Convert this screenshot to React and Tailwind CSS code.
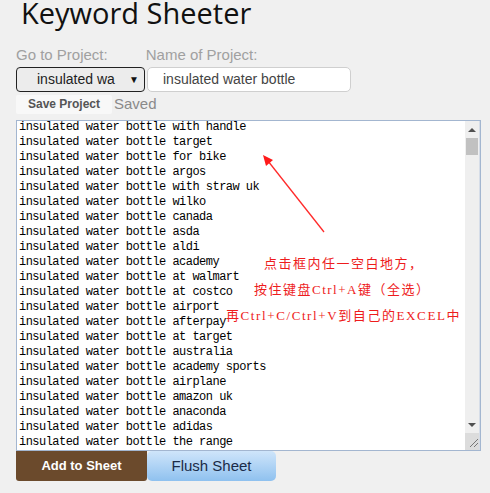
import React from "react";

const items = [
  "with handle", "target", "for bike", "argos", "with straw uk", "wilko", "canada", "asda", "aldi",
  "academy", "at walmart", "at costco", "airport", "afterpay", "at target", "australia",
  "academy sports", "airplane", "amazon uk", "anaconda", "adidas", "the range",
];

export default function App() {
  return (
    <div className="relative w-[490px] h-[493px] overflow-hidden bg-[#f0f0f0] pl-[16px]">
      <h1 className="pl-[5px] -mt-[3px] h-[47px] text-[29px] leading-[32px] text-[#111] font-['Open_Sans',sans-serif] font-normal whitespace-nowrap">
        Keyword Sheeter
      </h1>
      <div className="flex gap-[38px] h-[23px] items-center font-['Liberation_Sans',Arial,sans-serif] text-[15px] text-[#a0a0a0]">
        <span>Go to Project:</span>
        <span>Name of Project:</span>
      </div>
      <div className="flex gap-[2px] font-['Liberation_Sans',Arial,sans-serif] text-[14px]">
        <div className="w-[129px] h-[25px] border border-[#222] rounded-[4px] bg-[#ececec] flex items-center justify-between pl-[20px] pr-[5px] text-[#222]">
          <span>insulated wa</span>
          <span className="text-[10px] text-[#111]">▼</span>
        </div>
        <div className="w-[204px] h-[25px] border border-[#cfcfcf] rounded-[5px] bg-white flex items-center pl-[15px] text-[#444]">
          insulated water bottle
        </div>
      </div>
      <div className="flex items-center h-[22px] mt-[1px] font-['Liberation_Sans',Arial,sans-serif]">
        <div className="w-[96px] h-[19px] bg-[#f8f8f8] rounded-[2px] flex items-center justify-center text-[12px] font-bold text-[#555]">
          Save Project
        </div>
        <span className="ml-[2px] text-[15px] text-[#8a8a8a]">Saved</span>
      </div>
      <div className="mt-[5px] w-[465px] h-[331px] border border-[#a3b6d0] bg-white flex">
        <div className="flex-1 pl-[2px] overflow-hidden font-['Liberation_Mono',monospace] text-[12px] tracking-[-0.53px] leading-[15px] text-black">
          {items.map((t, i) => (
            <div key={i} className={i === 0 ? "-mt-[1px] whitespace-pre" : "whitespace-pre"}>
              insulated water bottle {t}
            </div>
          ))}
        </div>
        <div className="w-[15px] bg-[#efefef] flex flex-col border-r border-[#d6dde8]">
          <div className="h-[17px] flex items-center justify-center">
            <div className="w-0 h-0 border-l-[4px] border-r-[4px] border-b-[4px] border-l-transparent border-r-transparent border-b-[#505050]" />
          </div>
          <div className="mx-[1px] h-[17px] bg-[#c1c1c1]" />
          <div className="flex-1" />
          <div className="h-[17px] flex items-center justify-center">
            <div className="w-0 h-0 border-l-[4px] border-r-[4px] border-t-[4px] border-l-transparent border-r-transparent border-t-[#505050]" />
          </div>
          <div className="h-[17px] bg-[#dcdcdc] relative">
            <svg width="15" height="17" className="absolute inset-0">
              <line x1="5" y1="14" x2="13" y2="6" stroke="#777" strokeWidth="1" />
              <line x1="9" y1="14" x2="13" y2="10" stroke="#777" strokeWidth="1" />
            </svg>
          </div>
        </div>
      </div>
      <div className="flex font-['Liberation_Sans',Arial,sans-serif]">
        <div className="w-[131px] h-[30px] bg-[#6b4a2c] rounded-b-[3px] flex items-center justify-center text-white font-bold text-[13px]">
          Add to Sheet
        </div>
        <div className="w-[129px] h-[30px] rounded-[5px] bg-gradient-to-b from-[#cfe5fa] to-[#8fc1ef] flex items-center justify-center text-[#1a2b48] text-[15px]">
          Flush Sheet
        </div>
      </div>

      <svg className="absolute left-0 top-0 pointer-events-none" width="490" height="493">
        <line x1="324" y1="232" x2="268" y2="161" stroke="#ff2a2a" strokeWidth="1.3" />
        <polygon points="263,155 273,160 266,166" fill="#ff1a1a" />
      </svg>
      <div className="absolute left-[264px] top-[254px] text-[13px] tracking-[1.5px] text-[#ee1c1c] font-['Liberation_Serif','Noto_Sans_CJK_SC',serif] whitespace-nowrap">
        点击框内任一空白地方，
      </div>
      <div className="absolute left-[254px] top-[280px] text-[13px] tracking-[1.5px] text-[#ee1c1c] font-['Liberation_Serif','Noto_Sans_CJK_SC',serif] whitespace-nowrap">
        按住键盘Ctrl+A键（全选）
      </div>
      <div className="absolute left-[226px] top-[306px] text-[13px] tracking-[1.6px] text-[#ee1c1c] font-['Liberation_Serif','Noto_Sans_CJK_SC',serif] whitespace-nowrap">
        再Ctrl+C/Ctrl+V到自己的EXCEL中
      </div>
    </div>
  );
}
